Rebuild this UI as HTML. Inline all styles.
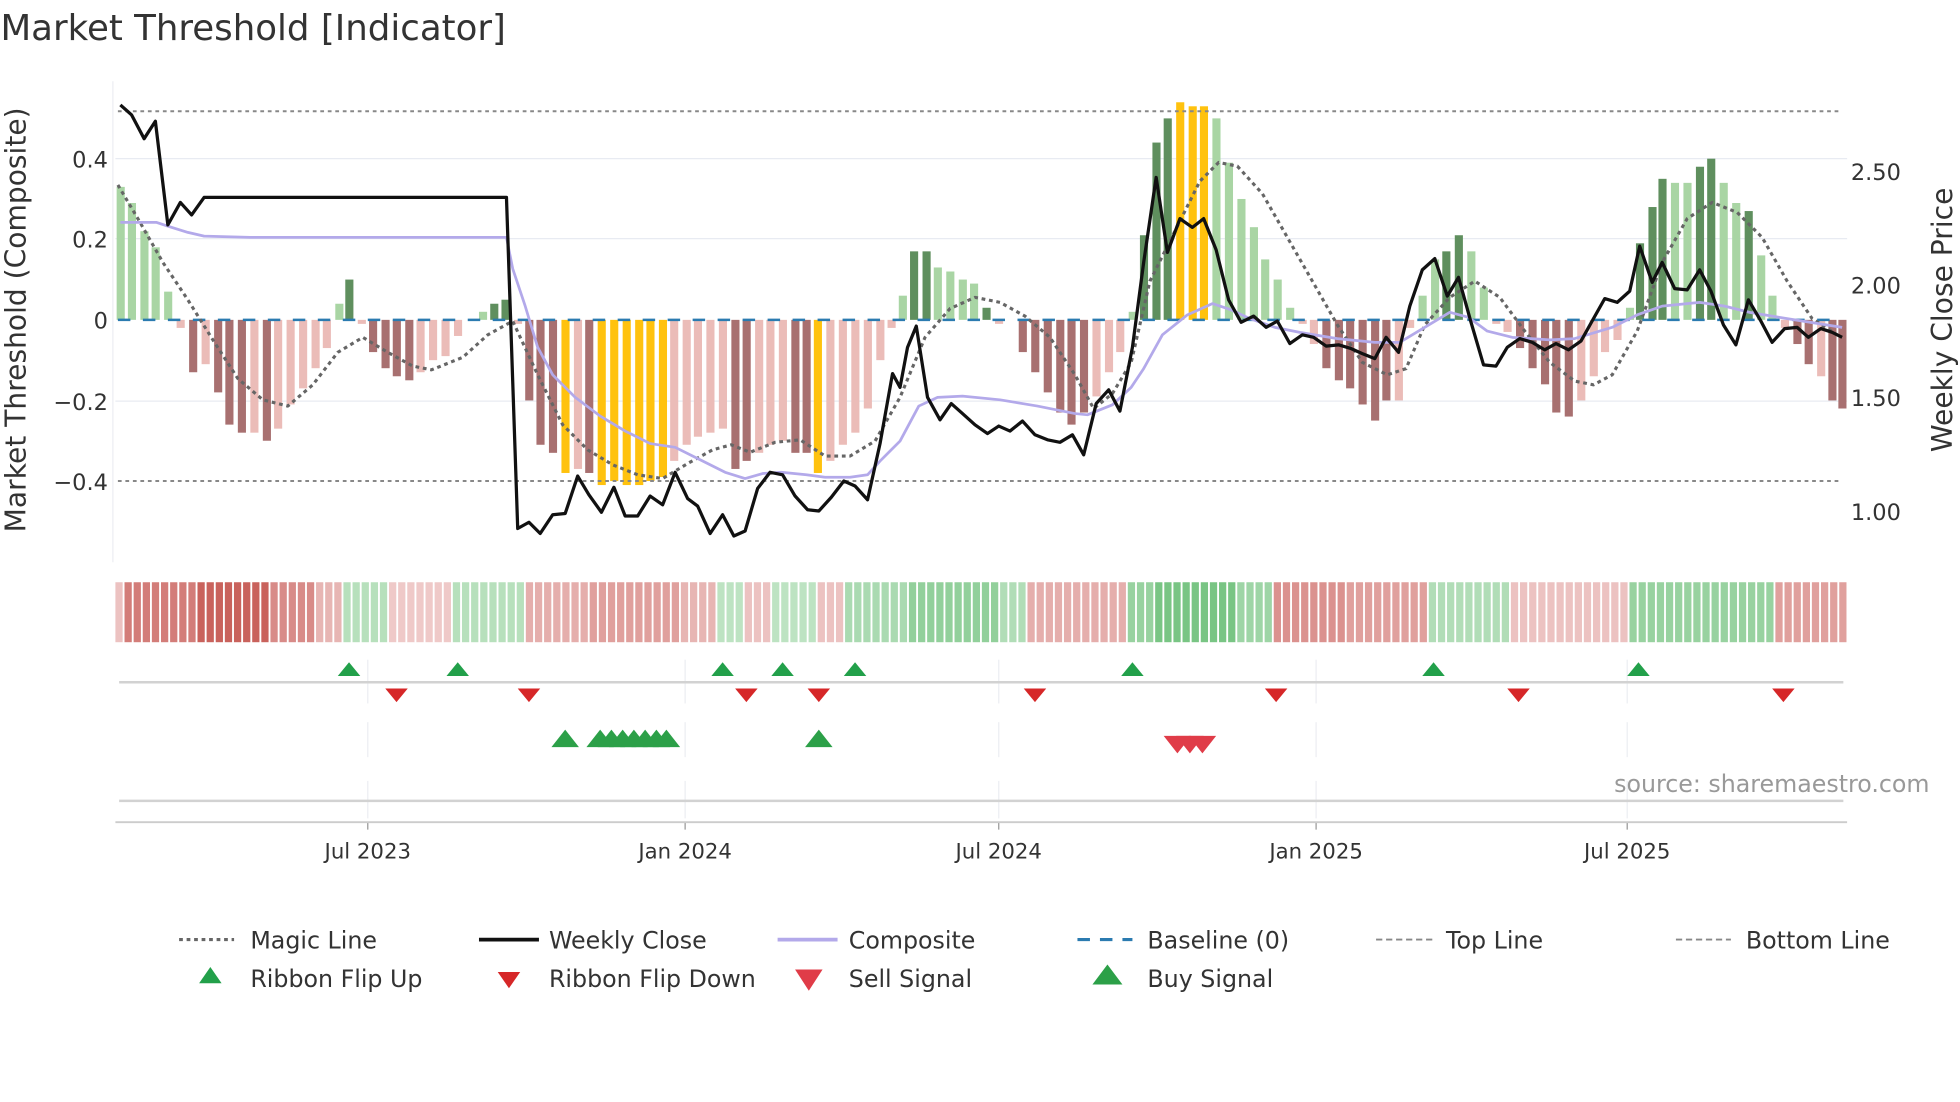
<!DOCTYPE html>
<html><head><meta charset="utf-8"><style>
html,body{margin:0;padding:0;background:#fff;width:1960px;height:1102px;overflow:hidden}
svg{display:block}
text{font-family:"DejaVu Sans","Liberation Sans",sans-serif;fill:#333}
</style></head><body>
<svg id="s" width="1960" height="1102" viewBox="0 0 1568 882" xmlns="http://www.w3.org/2000/svg">
<text x="0" y="32" font-size="28.5">Market Threshold [Indicator]</text>
<line x1="90" y1="65" x2="90" y2="450" stroke="#eceef2" stroke-width="1"/>
<g stroke="#e8ebf2" stroke-width="1">
<line x1="92" y1="127" x2="1478" y2="127"/><line x1="92" y1="191" x2="1478" y2="191"/>
<line x1="92" y1="321" x2="1478" y2="321"/>
</g>
<g id="bars"></g>
<g id="lines"></g>
<g font-size="18" text-anchor="end">
<text x="86" y="134">0.4</text><text x="86" y="198">0.2</text><text x="86" y="263">0</text>
<text x="86" y="328">−0.2</text><text x="86" y="392">−0.4</text>
</g>
<g font-size="18">
<text x="1481" y="144">2.50</text><text x="1481" y="235">2.00</text>
<text x="1481" y="325">1.50</text><text x="1481" y="416">1.00</text>
</g>
<text transform="translate(20,256) rotate(-90)" font-size="22.5" text-anchor="middle">Market Threshold (Composite)</text>
<text transform="translate(1562,256) rotate(-90)" font-size="22.5" text-anchor="middle">Weekly Close Price</text>
<g id="rib"></g>
<g stroke="#eceef2" stroke-width="1" id="vg"></g>
<line x1="95" y1="546" x2="1475" y2="546" stroke="#d2d2d2" stroke-width="2"/>
<line x1="95" y1="641" x2="1475" y2="641" stroke="#d2d2d2" stroke-width="2"/>
<line x1="92" y1="658" x2="1478" y2="658" stroke="#ccc" stroke-width="1.5"/>
<g id="mk"></g>
<text x="1544" y="634" font-size="19" text-anchor="end" style="fill:#999">source: sharemaestro.com</text>
<g font-size="17" text-anchor="middle">
<text x="294" y="687">Jul 2023</text><text x="548" y="687">Jan 2024</text><text x="799" y="687">Jul 2024</text>
<text x="1053" y="687">Jan 2025</text><text x="1302" y="687">Jul 2025</text>
</g>
<g font-size="19">
<line x1="143" y1="752" x2="187" y2="752" stroke="#666" stroke-width="2.5" stroke-dasharray="3,3"/><text x="200" y="759">Magic Line</text>
<line x1="383" y1="752" x2="431" y2="752" stroke="#111" stroke-width="3"/><text x="439" y="759">Weekly Close</text>
<line x1="622" y1="752" x2="670" y2="752" stroke="#b3a9ea" stroke-width="3"/><text x="679" y="759">Composite</text>
<line x1="862" y1="752" x2="906" y2="752" stroke="#2b7bb0" stroke-width="2.5" stroke-dasharray="10,8"/><text x="918" y="759">Baseline (0)</text>
<line x1="1101" y1="752" x2="1146" y2="752" stroke="#888" stroke-width="1.5" stroke-dasharray="5,3"/><text x="1157" y="759">Top Line</text>
<line x1="1341" y1="752" x2="1385" y2="752" stroke="#888" stroke-width="1.5" stroke-dasharray="5,3"/><text x="1397" y="759">Bottom Line</text>
<polygon points="168,774 177,787 159,787" fill="#22a04a"/><text x="200" y="790">Ribbon Flip Up</text>
<polygon points="398,778 416,778 407,791" fill="#d62728"/><text x="439" y="790">Ribbon Flip Down</text>
<polygon points="636,776 658,776 647,793" fill="#e03c48"/><text x="679" y="790">Sell Signal</text>
<polygon points="886,772 898,788 874,788" fill="#2ca048"/><text x="918" y="790">Buy Signal</text>
</g>
</svg>
<script>
var NS="http://www.w3.org/2000/svg";
function el(p,t,a){var e=document.createElementNS(NS,t);for(var k in a)e.setAttribute(k,a[k]);p.appendChild(e);return e;}
var C={g:"#a9d5a4",G:"#5f8f5e",p:"#ebbcb8",r:"#a87070",y:"#ffc20e"};
var B=[[96,.33,'g'],[105,.29,'g'],[115,.22,'g'],[124,.18,'g'],[134,.07,'g'],[144,-.02,'p'],[154,-.13,'r'],[164,-.11,'p'],[174,-.18,'r'],[183,-.26,'r'],[193,-.28,'r'],[203,-.28,'p'],[213,-.30,'r'],[222,-.27,'p'],[232,-.21,'p'],[242,-.17,'p'],[252,-.12,'p'],[261,-.07,'p'],[271,.04,'g'],[279,.10,'G'],[289,-.01,'p'],[298,-.08,'r'],[308,-.12,'r'],[317,-.14,'r'],[327,-.15,'r'],[336,-.13,'p'],[346,-.10,'p'],[356,-.09,'p'],[366,-.04,'p'],[386,.02,'g'],[395,.04,'G'],[404,.05,'G'],[414,-.01,'p'],[423,-.2,'r'],[432,-.31,'r'],[442,-.33,'r'],[452,-.38,'y'],[462,-.37,'p'],[471,-.38,'r'],[481,-.41,'y'],[491,-.40,'y'],[501,-.41,'y'],[511,-.41,'y'],[520,-.40,'y'],[530,-.39,'y'],[539,-.35,'p'],[549,-.31,'p'],[558,-.29,'p'],[568,-.28,'p'],[578,-.27,'p'],[588,-.37,'r'],[597,-.35,'r'],[607,-.33,'p'],[616,-.31,'p'],[626,-.30,'p'],[636,-.33,'r'],[645,-.33,'r'],[654,-.38,'y'],[664,-.35,'p'],[674,-.31,'p'],[684,-.28,'p'],[694,-.22,'p'],[704,-.10,'p'],[713,-.02,'p'],[722,.06,'g'],[731,.17,'G'],[741,.17,'G'],[750,.13,'g'],[760,.12,'g'],[770,.10,'g'],[779,.09,'g'],[789,.03,'G'],[799,-.01,'p'],[818,-.08,'r'],[828,-.13,'r'],[838,-.18,'r'],[848,-.23,'r'],[857,-.26,'r'],[867,-.23,'r'],[877,-.19,'p'],[887,-.13,'p'],[896,-.08,'p'],[906,.02,'g'],[915,.21,'G'],[925,.44,'G'],[934,.50,'G'],[944,.54,'y'],[954,.53,'y'],[963,.53,'y'],[973,.50,'g'],[983,.39,'g'],[993,.30,'g'],[1003,.23,'g'],[1012,.15,'g'],[1022,.10,'g'],[1032,.03,'g'],[1042,-.01,'p'],[1051,-.06,'p'],[1061,-.12,'r'],[1071,-.15,'r'],[1080,-.17,'r'],[1090,-.21,'r'],[1100,-.25,'r'],[1109,-.20,'r'],[1119,-.20,'p'],[1128,-.02,'p'],[1138,.06,'g'],[1148,.15,'g'],[1157,.17,'G'],[1167,.21,'G'],[1177,.17,'g'],[1187,.08,'g'],[1197,-.01,'p'],[1206,-.03,'p'],[1216,-.07,'r'],[1226,-.12,'r'],[1236,-.16,'r'],[1245,-.23,'r'],[1255,-.24,'r'],[1265,-.20,'p'],[1275,-.14,'p'],[1284,-.08,'p'],[1294,-.05,'p'],[1304,.03,'g'],[1312,.19,'G'],[1322,.28,'G'],[1330,.35,'G'],[1340,.34,'g'],[1350,.34,'g'],[1360,.38,'G'],[1369,.40,'G'],[1379,.34,'g'],[1389,.29,'g'],[1399,.27,'G'],[1409,.16,'g'],[1418,.06,'g'],[1428,-.02,'p'],[1438,-.06,'r'],[1447,-.11,'r'],[1457,-.14,'p'],[1466,-.20,'r'],[1474,-.22,'r']];
var bg=document.getElementById('bars');
B.forEach(function(b){var h=b[1]*322.5;var y=h>0?256-h:256;el(bg,'rect',{x:b[0]-3,y:y,width:6.5,height:Math.abs(h),fill:C[b[2]]});});
var L=document.getElementById('lines');
el(L,'line',{x1:94,y1:89,x2:1474,y2:89,stroke:"#888","stroke-width":1.6,"stroke-dasharray":"3,3"});
el(L,'line',{x1:94,y1:385,x2:1474,y2:385,stroke:"#888","stroke-width":1.6,"stroke-dasharray":"3,3"});
el(L,'line',{x1:94,y1:256,x2:1474,y2:256,stroke:"#2b7bb0","stroke-width":2,"stroke-dasharray":"10,10"});
function pl(pts,st,w,da){var a={points:pts,fill:"none",stroke:st,"stroke-width":w,"stroke-linejoin":"round"};if(da)a["stroke-dasharray"]=da;el(L,'polyline',a);}
pl("94,148 110,175 130,210 150,240 170,272 190,303 210,320 230,325 250,308 270,282 290,270 310,282 330,293 345,296 370,286 390,268 410,257 430,300 450,340 470,360 490,372 510,380 530,383 550,371 570,360 585,356 600,362 620,354 640,352 660,365 680,365 700,353 720,318 740,270 760,247 780,238 800,242 820,253 840,270 860,300 875,327 890,315 905,290 920,225 940,185 960,145 975,130 990,133 1010,155 1030,190 1050,225 1070,260 1090,290 1110,300 1125,295 1140,260 1160,238 1180,225 1200,238 1220,265 1240,290 1260,305 1275,308 1290,300 1310,265 1330,210 1350,175 1370,162 1390,170 1410,190 1430,225 1450,255 1470,268","#666",2.5,"3,3");
pl("96,178 125,178 134,181 150,186 163,189 200,190 405,190 410,215 420,245 430,278 442,300 460,318 480,333 500,345 520,355 540,358 560,368 580,378 596,383 610,379 625,378 645,380 660,382 680,382 694,380 704,369 720,353 735,325 750,318 770,317 800,320 830,325 860,331 870,332 890,324 905,310 915,295 930,268 950,252 970,243 985,248 1000,255 1020,262 1040,266 1070,271 1100,274 1120,274 1140,262 1160,250 1175,254 1190,265 1210,270 1240,272 1260,271 1290,262 1310,252 1330,245 1360,242 1380,245 1400,250 1430,255 1474,262","#b3a9ea",2.2);
pl("96,84 105,92 115,111 124,97 134,180 144,162 153,172 163,158 405,158 414,423 423,418 432,427 442,412 452,411 462,381 471,396 481,410 491,390 500,413 510,413 520,397 530,404 540,378 550,399 558,405 568,427 578,412 587,429 596,425 606,391 616,378 626,380 636,397 646,408 655,409 665,398 675,385 684,389 694,400 704,355 714,299 720,310 726,278 733,261 742,318 752,336 761,323 770,331 780,340 790,347 799,341 808,345 818,337 828,348 838,352 848,354 858,348 867,364 877,323 887,312 896,329 906,278 915,210 925,142 934,202 944,175 954,182 963,175 973,200 983,240 993,258 1003,253 1013,262 1022,257 1032,275 1042,268 1051,270 1061,277 1071,276 1081,279 1090,283 1100,287 1109,270 1119,282 1128,245 1138,216 1148,207 1158,237 1167,222 1177,258 1187,292 1197,293 1206,278 1216,271 1226,274 1236,280 1245,275 1255,280 1265,273 1275,255 1284,239 1294,242 1304,233 1312,197 1322,226 1330,210 1340,231 1350,232 1360,216 1369,233 1379,260 1389,276 1399,240 1409,257 1418,274 1428,263 1438,262 1447,270 1457,263 1466,266 1474,270","#111",2.6);
var S=[[92,100,'r',.2],[100,160,'r',.7],[160,215,'r',.9],[215,250,'r',.6],[250,273,'r',.3],[273,312,'g',.3],[312,360,'r',.15],[360,418,'g',.3],[418,470,'r',.35],[470,545,'r',.45],[545,572,'r',.3],[572,592,'g',.25],[592,620,'r',.2],[620,650,'g',.25],[650,678,'r',.2],[678,730,'g',.4],[730,800,'g',.6],[800,822,'g',.35],[822,900,'r',.35],[900,925,'g',.55],[925,990,'g',.8],[990,1016,'g',.5],[1016,1080,'r',.55],[1080,1141,'r',.45],[1141,1208,'g',.35],[1208,1306,'r',.2],[1306,1420,'g',.55],[1420,1480,'r',.45]];
function mix(a,b,t){return 'rgb('+[0,1,2].map(function(i){return Math.round(a[i]+(b[i]-a[i])*t)}).join(',')+')';}
var R=document.getElementById('rib');
for(var x=92;x<1474;x+=7.3){var cx=x+3;var c='#eee';S.forEach(function(s){if(cx>=s[0]&&cx<s[1]){c=s[2]=='r'?mix([246,222,222],[196,84,78],s[3]):mix([220,240,222],[96,186,110],s[3]);}});el(R,'rect',{x:x,y:466,width:5.8,height:48,fill:c});}
var V=document.getElementById('vg');[294,548,799,1053,1302].forEach(function(x){el(V,'line',{x1:x,y1:528,x2:x,y2:563});el(V,'line',{x1:x,y1:578,x2:x,y2:606});el(V,'line',{x1:x,y1:625,x2:x,y2:655});el(V,'line',{x1:x,y1:658,x2:x,y2:664,stroke:"#999"});});
var M=document.getElementById('mk');
[279,366,578,626,684,906,1147,1311].forEach(function(x){el(M,'polygon',{points:(x)+",530 "+(x+9)+",541 "+(x-9)+",541",fill:"#22a04a"});});
[317,423,597,655,828,1021,1215,1427].forEach(function(x){el(M,'polygon',{points:(x-9)+",551 "+(x+9)+",551 "+x+",562",fill:"#d62728"});});
[452,480,489,498,507,516,525,533,655].forEach(function(x){el(M,'polygon',{points:x+",584 "+(x+11)+",598 "+(x-11)+",598",fill:"#2ca048"});});
[942,952,962].forEach(function(x){el(M,'polygon',{points:(x-11)+",589 "+(x+11)+",589 "+x+",603",fill:"#e03c48"});});
</script>
</body></html>
